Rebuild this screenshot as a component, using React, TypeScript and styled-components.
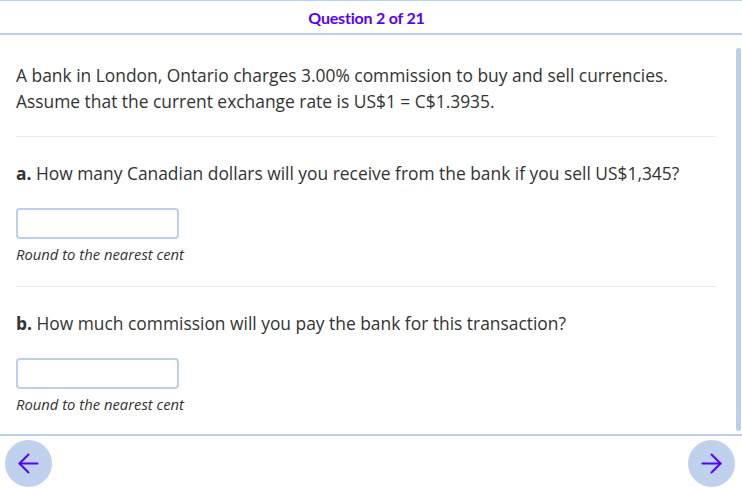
import React from "react";
import styled, { createGlobalStyle } from "styled-components";
import { ArrowLeft, ArrowRight } from "lucide-react";

const Global = createGlobalStyle`
  html, body { margin: 0; padding: 0; background: #fff; }
  * { box-sizing: border-box; }
`;

const Page = styled.div`
  height: 100vh;
  display: flex;
  flex-direction: column;
  font-family: "Open Sans", "Liberation Sans", sans-serif;
  color: #333;
`;

const Header = styled.header`
  flex: none;
  height: 35px;
  border-top: 1px solid #bccfec;
  border-bottom: 2px solid #bccfec;
  display: flex;
  align-items: center;
  justify-content: center;
  padding-right: 9px;
  font-family: Lato, "Open Sans", sans-serif;
  font-weight: 700;
  font-size: 16px;
  color: #5500ff;
  letter-spacing: -0.2px;
`;

const ScrollFrame = styled.div`
  flex: 1;
  min-height: 0;
  position: relative;
`;

const Scroll = styled.main`
  height: 100%;
  overflow-y: auto;
  scrollbar-width: none;
  &::-webkit-scrollbar { display: none; }
`;

const Thumb = styled.div`
  position: absolute;
  top: 13px;
  bottom: 3px;
  right: 1px;
  width: 5px;
  border-radius: 3px;
  background: #bccfec;
`;

const Content = styled.div`
  padding: 27px 25px 40px 16px;
`;

const Para = styled.p`
  margin: 0;
  font-size: 17.4px;
  line-height: 26px;
`;

const Divider = styled.hr`
  border: none;
  border-top: 1px solid #ececec;
  margin: 22px 0 23px;
`;

const Part = styled.section`
  display: flex;
  flex-direction: column;
  align-items: flex-start;
`;

const Label = styled.b`
  font-weight: 700;
`;

const Answer = styled.input`
  margin-top: 22px;
  width: 163px;
  height: 31px;
  border: 2px solid #bccfec;
  border-radius: 4px;
  outline: none;
  font: inherit;
  padding: 0 6px;
`;

const Hint = styled.i`
  margin: 6px 0 1px;
  font-size: 14.8px;
  line-height: 18px;
`;

const Footer = styled.footer`
  flex: none;
  height: 55px;
  border-top: 2px solid #bccfec;
  display: flex;
  justify-content: space-between;
  align-items: flex-start;
  padding: 4px 7px 0 5px;
`;

const NavButton = styled.button`
  width: 47px;
  height: 47px;
  border-radius: 50%;
  border: none;
  background: #bfd1ed;
  color: #5500ff;
  display: flex;
  align-items: center;
  justify-content: center;
  padding: 0;
  cursor: pointer;
`;

export default function App() {
  return (
    <Page>
      <Global />
      <Header>Question 2 of 21</Header>
      <ScrollFrame>
        <Scroll>
          <Content>
            <Para>
              A bank in London, Ontario charges 3.00% commission to buy and sell currencies.
              <br />
              Assume that the current exchange rate is US$1 = C$1.3935.
            </Para>
            <Divider />
            <Part>
              <Para>
                <Label>a.</Label> How many Canadian dollars will you receive from the bank if you sell US$1,345?
              </Para>
              <Answer type="text" />
              <Hint>Round to the nearest cent</Hint>
            </Part>
            <Divider />
            <Part>
              <Para>
                <Label>b.</Label> How much commission will you pay the bank for this transaction?
              </Para>
              <Answer type="text" />
              <Hint>Round to the nearest cent</Hint>
            </Part>
          </Content>
        </Scroll>
        <Thumb />
      </ScrollFrame>
      <Footer>
        <NavButton aria-label="Previous">
          <ArrowLeft size={31} strokeWidth={1.5} />
        </NavButton>
        <NavButton aria-label="Next">
          <ArrowRight size={31} strokeWidth={1.5} />
        </NavButton>
      </Footer>
    </Page>
  );
}
